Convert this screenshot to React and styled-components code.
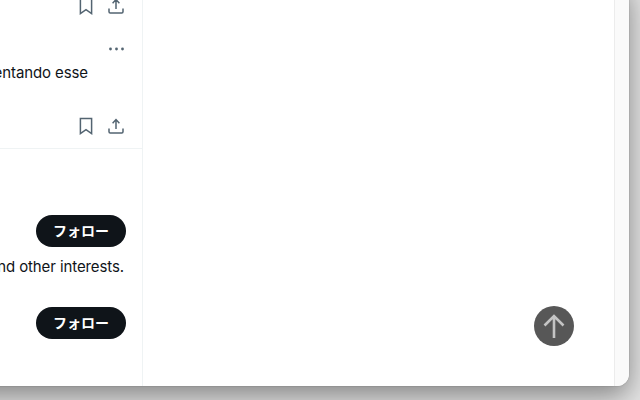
import React from "react";
import styled, {createGlobalStyle} from "styled-components";

const GlobalStyle = createGlobalStyle`
  html, body {
    margin: 0;
    padding: 0;
    height: 400px;
    overflow: hidden;
    background-color: #e4e4e4;
    font-family: Inter, "Liberation Sans", sans-serif;
  }
`;

const Stage = styled.div`
  width: 640px;
  height: 400px;
  overflow: hidden;
`;

const Window = styled.div`
  position: relative;
  width: 929px;
  height: 406px;
  margin: -20px 0 0 -300px;
  display: flex;
  background-color: #ffffff;
  border-radius: 12px;
  box-shadow: 0 0 1px rgba(0, 0, 0, 0.5), 0 10px 28px rgba(0, 0, 0, 0.42);
`;

const Sidebar = styled.aside`
  width: 443px;
  flex-shrink: 0;
  padding-top: 16px;
  box-sizing: border-box;
  border-right: 1px solid #eff3f4;
  overflow: hidden;
`;

const Main = styled.main`
  flex: 1;
`;

const ScrollTrack = styled.div`
  width: 14px;
  border-left: 1px solid #ececec;
  background-color: #fafafa;
  border-radius: 0 12px 12px 0;
`;

const Post = styled.article`
  margin-top: 23px;
  padding-bottom: 12px;
  border-bottom: 1px solid #eff3f4;
`;

const Row = styled.div`
  height: 20px;
  display: flex;
  justify-content: flex-end;
  align-items: center;
  padding-right: 18px;
`;

const Actions = styled(Row)`
  gap: 14px;
  margin-top: ${({$top}) => $top || 0}px;
`;

const BodyText = styled.p`
  margin: ${({$top}) => $top || 0}px 0 0;
  padding-right: ${({$right}) => $right}px;
  font-size: 15px;
  line-height: 28px;
  letter-spacing: -0.1px;
  color: #0f1419;
  text-align: right;
  white-space: nowrap;
`;

const People = styled.section`
  padding: 66px 16px 0 0;
`;

const FollowRow = styled.div`
  display: flex;
  justify-content: flex-end;
  margin-top: ${({$top}) => $top || 0}px;
`;

const FollowButton = styled.button`
  width: 90px;
  height: 32px;
  padding: 0 0 3px;
  border: none;
  border-radius: 16px;
  background-color: #0f1419;
  color: #ffffff;
  font-family: "Noto Sans CJK JP", sans-serif;
  font-size: 14px;
  font-weight: 700;
`;

const ScrollTop = styled.button`
  position: absolute;
  right: 55px;
  bottom: 40px;
  width: 40px;
  height: 40px;
  padding: 0;
  border: none;
  border-radius: 50%;
  background-color: #575757;
  display: flex;
  align-items: center;
  justify-content: center;
`;

const Icon = styled.svg`
  display: block;
  fill: none;
  stroke: #536471;
  stroke-width: 1.5;
`;

const BookmarkIcon = () => (
    <Icon width="16" height="18" viewBox="0 0 16 18">
        <path d="M2.4 1.4h11.2v15.2l-5.6-3.9-5.6 3.9z"/>
    </Icon>
);

const ShareIcon = () => (
    <Icon width="16" height="18" viewBox="0 0 16 18">
        <path d="M8 12V3M4.6 6.2 8 2.6l3.4 3.6M1 11.5v3.2c0 .7.5 1.2 1.2 1.2h11.6c.7 0 1.2-.5 1.2-1.2v-3.2"/>
    </Icon>
);

const MoreIcon = () => (
    <svg width="15" height="4" viewBox="0 0 15 4" fill="#536471" style={{display: "block"}}>
        <circle cx="1.5" cy="2" r="1.4"/>
        <circle cx="7.5" cy="2" r="1.4"/>
        <circle cx="13.5" cy="2" r="1.4"/>
    </svg>
);

const ActionIcons = ({top}) => (
    <Actions $top={top}>
        <BookmarkIcon/>
        <ShareIcon/>
    </Actions>
);

export default function App() {
    return (
        <Stage>
            <GlobalStyle/>
            <Window>
                <Sidebar>
                    <ActionIcons/>
                    <Post>
                        <Row><MoreIcon/></Row>
                        <BodyText $right={54}>experimentando esse</BodyText>
                        <ActionIcons top={29}/>
                    </Post>
                    <People>
                        <FollowRow><FollowButton>フォロー</FollowButton></FollowRow>
                        <BodyText $top={6} $right={2}>and other interests.</BodyText>
                        <FollowRow $top={26}><FollowButton>フォロー</FollowButton></FollowRow>
                    </People>
                </Sidebar>
                <Main/>
                <ScrollTrack/>
                <ScrollTop aria-label="Scroll to top">
                    <svg width="40" height="40" viewBox="0 0 40 40" fill="none" stroke="#c4c4c4" strokeWidth="2.6">
                        <path d="M20 32V10M10.5 19.5 20 10l9.5 9.5"/>
                    </svg>
                </ScrollTop>
            </Window>
        </Stage>
    );
}
